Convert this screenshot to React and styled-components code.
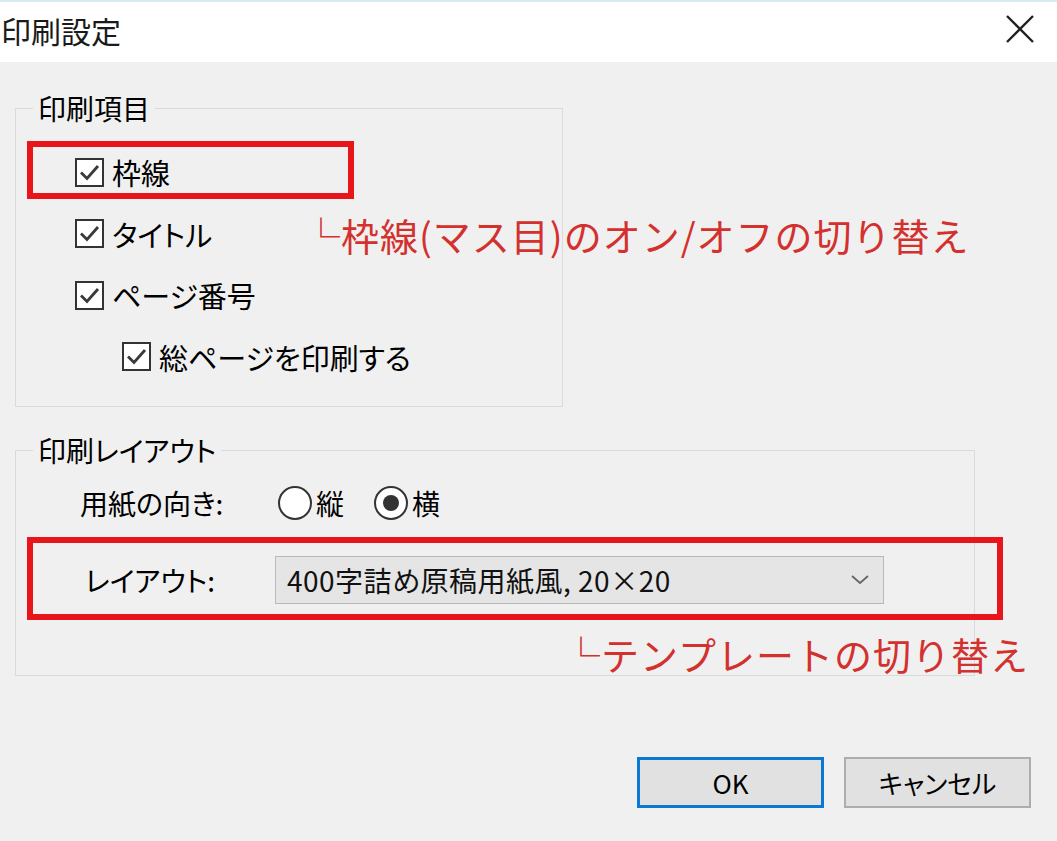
import React from 'react';
import styled, { createGlobalStyle } from 'styled-components';

const GlobalStyle = createGlobalStyle`
  html, body {
    margin: 0;
    padding: 0;
    background: #f0f0f0;
  }
  body {
    font-family: "Noto Sans CJK JP", "Noto Sans", sans-serif;
    font-feature-settings: "palt";
    color: #000;
  }
`;

const Dialog = styled.div`
  width: 1057px;
  height: 841px;
  display: flex;
  flex-direction: column;
  background: #f0f0f0;
  overflow: hidden;
`;

const TitleBar = styled.div`
  height: 62px;
  flex: 0 0 auto;
  box-sizing: border-box;
  border-top: 2px solid #d6ebf3;
  background: #fff;
  display: flex;
  align-items: center;
  justify-content: space-between;
  padding: 0 20px 0 1px;
`;

const Title = styled.div`
  font-size: 30px;
  line-height: 34px;
  color: #1a1a1a;
  margin-top: -4px;
`;

const CloseButton = styled.button`
  border: 0;
  background: transparent;
  padding: 0;
  width: 34px;
  height: 34px;
  display: flex;
  align-items: center;
  justify-content: center;
  margin-top: -6px;
`;

const Body = styled.div`
  flex: 1 1 auto;
  display: flex;
  flex-direction: column;
  padding: 29px 82px 0 15px;
`;

const Group = styled.fieldset`
  margin: ${(p) => p.$mt || 0}px 0 0 0;
  padding: 0;
  box-sizing: border-box;
  width: ${(p) => p.$w}px;
  height: ${(p) => p.$h}px;
  border: 1px solid #dadada;
  border-radius: 0;
  min-inline-size: 0;
`;

const Legend = styled.legend`
  margin-left: 17px;
  padding: 0 5px;
  font-size: 28px;
  line-height: 34px;
  color: #000;
`;

const GroupContent = styled.div`
  display: flex;
  flex-direction: column;
  gap: ${(p) => p.$gap}px;
  padding: ${(p) => p.$pt}px 0 0 0;
`;

const CheckRow = styled.label`
  display: flex;
  align-items: center;
  height: 30px;
  margin-left: ${(p) => p.$indent}px;
  font-size: 29px;
  line-height: 30px;
  align-self: flex-start;
  position: relative;
`;

const Box = styled.span`
  width: 29px;
  height: 29px;
  box-sizing: border-box;
  border: 2px solid #333;
  background: #fff;
  display: flex;
  align-items: center;
  justify-content: center;
  margin-right: 8px;
`;

const FieldRow = styled.div`
  display: flex;
  align-items: center;
  height: ${(p) => p.$h}px;
  margin-left: ${(p) => p.$indent}px;
  align-self: flex-start;
  position: relative;
  font-size: 28px;
`;

const FieldLabel = styled.span`
  width: ${(p) => p.$w}px;
  color: #000;
`;

const RadioOption = styled.label`
  display: flex;
  align-items: center;
  margin-right: 30px;
`;

const RadioCircle = styled.span`
  width: 34px;
  height: 34px;
  box-sizing: border-box;
  border-radius: 50%;
  border: 2px solid #333;
  background: #fff;
  display: flex;
  align-items: center;
  justify-content: center;
  margin-right: 4px;
  &::after {
    content: '';
    width: 16px;
    height: 16px;
    border-radius: 50%;
    background: ${(p) => (p.$checked ? '#333' : 'transparent')};
  }
`;

const Select = styled.div`
  width: 609px;
  height: 48px;
  box-sizing: border-box;
  border: 1px solid #b9b9b9;
  background: #e5e5e5;
  display: flex;
  align-items: center;
  justify-content: space-between;
  padding: 0 13px 0 11px;
  font-size: 28px;
  letter-spacing: 0.5px;
  color: #111;
`;

const Frame = styled.span`
  position: absolute;
  left: ${(p) => p.$l}px;
  top: ${(p) => p.$t}px;
  width: ${(p) => p.$w}px;
  height: ${(p) => p.$h}px;
  box-sizing: border-box;
  border: 6px solid #e8151b;
  pointer-events: none;
`;

const Note = styled.span`
  position: absolute;
  left: ${(p) => p.$l}px;
  top: ${(p) => p.$t}px;
  white-space: nowrap;
  font-size: 38px;
  line-height: 44px;
  letter-spacing: 1px;
  color: #d3312e;
  font-feature-settings: normal;
`;

const Corner = styled.span`
  font-weight: 300;
`;

const Footer = styled.div`
  margin-top: auto;
  display: flex;
  justify-content: flex-end;
  gap: 20px;
  padding: 0 26px 33px 0;
`;

const Button = styled.button`
  width: 187px;
  height: 51px;
  box-sizing: border-box;
  background: #e1e1e1;
  border: ${(p) => (p.$primary ? '3px solid #0a78d4' : '2px solid #adadad')};
  font-family: "Noto Sans CJK JP", "Noto Sans", sans-serif;
  font-feature-settings: "palt";
  font-size: 26px;
  color: #000;
  padding: 0;
`;

const Check = () => (
  <Box>
    <svg width="23" height="23" viewBox="0 0 23 23">
      <polyline points="3,11.5 9,17.5 20,5" fill="none" stroke="#3a3a3a" strokeWidth="2.8" />
    </svg>
  </Box>
);

const Chevron = () => (
  <svg width="20" height="12" viewBox="0 0 20 12">
    <polyline points="2,2 10,9 18,2" fill="none" stroke="#666" strokeWidth="1.8" />
  </svg>
);

const CloseIcon = () => (
  <svg width="30" height="30" viewBox="0 0 30 30">
    <path d="M2 2 L28 28 M28 2 L2 28" stroke="#222" strokeWidth="2.4" />
  </svg>
);

const App = () => (
  <>
    <GlobalStyle />
    <Dialog>
      <TitleBar>
        <Title>印刷設定</Title>
        <CloseButton aria-label="閉じる">
          <CloseIcon />
        </CloseButton>
      </TitleBar>
      <Body>
        <Group $w={548} $h={316}>
          <Legend>印刷項目</Legend>
          <GroupContent $pt={32} $gap={31.5}>
            <CheckRow $indent={59}>
              <Check />
              枠線
              <Frame $l={-48} $t={-16} $w={327} $h={58} />
              <Note $l={227} $t={56}>
                <Corner>└</Corner>枠線(マス目)のオン/オフの切り替え
              </Note>
            </CheckRow>
            <CheckRow $indent={59}>
              <Check />
              タイトル
            </CheckRow>
            <CheckRow $indent={59}>
              <Check />
              ページ番号
            </CheckRow>
            <CheckRow $indent={106}>
              <Check />
              総ページを印刷する
            </CheckRow>
          </GroupContent>
        </Group>
        <Group $mt={26} $w={960} $h={243}>
          <Legend>印刷レイアウト</Legend>
          <GroupContent $pt={19} $gap={36}>
            <FieldRow $indent={64} $h={34}>
              <FieldLabel $w={198}>用紙の向き:</FieldLabel>
              <RadioOption>
                <RadioCircle />縦
              </RadioOption>
              <RadioOption>
                <RadioCircle $checked />横
              </RadioOption>
            </FieldRow>
            <FieldRow $indent={69} $h={48}>
              <FieldLabel $w={190}>レイアウト:</FieldLabel>
              <Select>
                <span>400字詰め原稿用紙風, 20×20</span>
                <Chevron />
              </Select>
              <Frame $l={-58} $t={-19} $w={976} $h={83} />
              <Note $l={477} $t={76}>
                <Corner>└</Corner>テンプレートの切り替え
              </Note>
            </FieldRow>
          </GroupContent>
        </Group>
      </Body>
      <Footer>
        <Button $primary>OK</Button>
        <Button>キャンセル</Button>
      </Footer>
    </Dialog>
  </>
);

export default App;
